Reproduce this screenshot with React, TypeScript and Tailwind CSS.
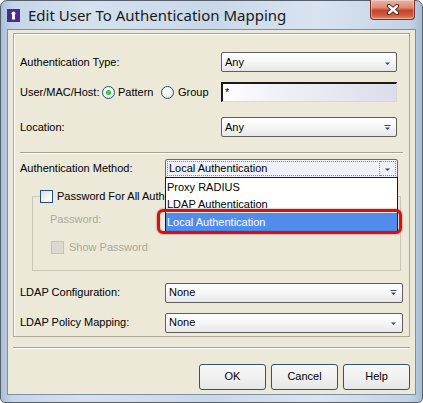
import React from 'react';

function Arrow({ bar }: { bar?: boolean }) {
  return (
    <svg width="7" height="7" viewBox="0 0 7 7" className="shrink-0">
      {bar && <rect x="0.5" y="1" width="6" height="1" fill="#2e4b73" />}
      <path d="M1 3.5h5L3.5 6z" fill="#2e4b73" />
    </svg>
  );
}

function Combo({ value, w, bar }: { value: string; w: string; bar?: boolean }) {
  return (
    <div
      className={`${w} flex h-[20px] shrink-0 items-center justify-between rounded-[2px] border border-[#5f5f5f] bg-[linear-gradient(180deg,#ffffff_0%,#f7f7f7_45%,#e7e7e7_100%)] pl-[3px] pr-[5px]`}
    >
      <span>{value}</span>
      <Arrow bar={bar} />
    </div>
  );
}

function Radio({ checked }: { checked?: boolean }) {
  return (
    <span className="flex h-[13px] w-[13px] shrink-0 items-center justify-center rounded-full border border-[#1d5281] bg-[radial-gradient(circle_at_40%_35%,#ffffff_0%,#f1f1ec_55%,#d4d4cc_100%)]">
      {checked && <span className="h-[5px] w-[5px] rounded-full bg-[radial-gradient(circle,#5fd35f_0%,#21a121_100%)]" />}
    </span>
  );
}

function Button({ label }: { label: string }) {
  return (
    <div className="flex h-[26px] w-[67px] items-center justify-center rounded-[3px] border border-[#335170] bg-[linear-gradient(180deg,#f8f8f8_0%,#efefef_60%,#e6e6e6_100%)]">
      {label}
    </div>
  );
}

export default function App() {
  return (
    <div className="h-[403px] w-[423px] bg-white font-['Liberation_Sans',Arial,sans-serif] text-[11px] text-black">
      <div className="relative flex h-[403px] flex-col rounded-t-[7px] rounded-b-[5px] border border-[#56606c] bg-[linear-gradient(90deg,#a9c0da_0%,#c6d6e8_3%,#d5e1ee_20%,#c9d8e9_50%,#d9e4f0_75%,#c2d3e6_97%,#a6bdd7_100%)] px-[6px] pb-[7px]">
        {/* title bar */}
        <div className="flex h-[28px] shrink-0 items-center">
          <svg width="13" height="13" viewBox="0 0 13 13" className="shrink-0">
            <rect width="13" height="13" fill="#4a2b8e" />
            <circle cx="6.5" cy="4.5" r="2" fill="#fff" />
            <path d="M5.3 5.5h2.4l0.5 5h-3.4z" fill="#fff" />
          </svg>
          <span className="ml-[8px] font-['Noto_Sans',sans-serif] text-[15px] leading-none text-[#1a1a1a]">
            Edit User To Authentication Mapping
          </span>
        </div>

        {/* close button */}
        <div className="absolute right-[7px] top-[-1px] flex h-[20px] w-[45px] items-center justify-center rounded-b-[4px] border border-t-0 border-[#7a3024] bg-[linear-gradient(180deg,#eab3a6_0%,#dc8a76_40%,#c7442b_55%,#cf5a3e_80%,#e08a6c_100%)] shadow-[inset_0_0_0_1px_rgba(255,255,255,0.35)]">
          <svg width="14" height="11" viewBox="0 0 14 11">
            <path d="M3 2l8 7M11 2l-8 7" stroke="#4a1a12" strokeWidth="4.2" strokeLinecap="round" />
            <path d="M3 2l8 7M11 2l-8 7" stroke="#ffffff" strokeWidth="2.4" strokeLinecap="round" />
          </svg>
        </div>

        {/* client area */}
        <div className="flex flex-1 flex-col border border-[#7d8ea6] bg-[#ece9d8]">
          <div className="mx-[5px] mt-[3px] flex flex-col border border-[#aca899] pb-[3px] pl-[6px] pt-[18px] shadow-[inset_1px_1px_0_#ffffff]">
            <div className="flex h-[20px] items-center">
              <span className="w-[201px] shrink-0">Authentication Type:</span>
              <Combo value="Any" w="w-[176px]" />
            </div>

            <div className="mt-[10px] flex h-[20px] items-center">
              <div className="flex w-[201px] shrink-0 items-center">
                <span className="w-[82px] shrink-0">User/MAC/Host:</span>
                <Radio checked />
                <span className="ml-[3px] w-[43px] shrink-0">Pattern</span>
                <Radio />
                <span className="ml-[4px]">Group</span>
              </div>
              <div className="flex h-[20px] w-[176px] items-center border-l-2 border-t-2 border-b border-r border-l-[#1a1a1a] border-t-[#1a1a1a] border-b-[#d6d6e0] border-r-[#d6d6e0] bg-[linear-gradient(90deg,#ffffff_0%,#f1f1f8_30%,#e6e6f1_70%,#dcdcec_100%)] pl-[2px]">
                *
              </div>
            </div>

            <div className="mt-[15px] flex h-[20px] items-center">
              <span className="w-[201px] shrink-0">Location:</span>
              <Combo value="Any" w="w-[176px]" bar />
            </div>

            <div className="mr-[6px] mt-[15px] border-b border-t border-b-white border-t-[#a4a290]" />

            <div className="mt-[5px] flex h-[19px] items-center">
              <span className="w-[145px] shrink-0">Authentication Method:</span>
              <div className="relative h-[19px] w-[233px] shrink-0">
                <div className="flex h-[19px] items-stretch rounded-[2px] border border-[#5b6a9a] bg-[#f0f0f8] p-[1px]">
                  <div className="flex flex-1 items-center border border-dotted border-[#7b86a8] pl-[1px]">
                    Local Authentication
                  </div>
                  <div className="flex w-[16px] items-center justify-center border border-l-0 border-dotted border-[#7b86a8]">
                    <Arrow />
                  </div>
                </div>
                {/* open list */}
                <div className="absolute left-0 top-[18px] z-10 w-[233px] border border-[#1a1a1a] bg-white">
                  <div className="flex h-[18px] items-center pl-[1px]">Proxy RADIUS</div>
                  <div className="flex h-[17px] items-center pl-[1px]">LDAP Authentication</div>
                  <div className="flex h-[18px] items-center bg-[#4f8ceb] pl-[1px] text-white">Local Authentication</div>
                </div>
                <div className="absolute left-[-8px] top-[50px] z-20 h-[25px] w-[245px] rounded-[6px] border-[3px] border-[#e20a0a] shadow-[0_0_2px_rgba(60,0,0,0.6),inset_0_0_1px_rgba(60,0,0,0.6)]" />
              </div>
            </div>

            <fieldset className="ml-[12px] mt-[11px] w-[369px] border border-[#c9c7b8] pb-[16px] pl-[7px]">
              <legend className="flex h-[14px] items-center pr-[2px]">
                <span className="h-[13px] w-[13px] border border-[#1d5281] bg-[linear-gradient(135deg,#dcdcd4_0%,#f6f6f2_60%,#ffffff_100%)]" />
                <span className="ml-[4px]">Password For All Authentication Methods</span>
              </legend>
              <div className="ml-[10px] mt-[8px] text-[#aca899]">Password:</div>
              <div className="ml-[11px] mt-[13px] flex h-[13px] items-center">
                <span className="h-[13px] w-[13px] border border-[#c4c2b6] bg-[#dcdad0]" />
                <span className="ml-[5px] text-[#aca899]">Show Password</span>
              </div>
            </fieldset>

            <div className="mt-[12px] flex h-[20px] items-center">
              <span className="w-[145px] shrink-0">LDAP Configuration:</span>
              <Combo value="None" w="w-[238px]" bar />
            </div>

            <div className="mt-[10px] flex h-[20px] items-center">
              <span className="w-[145px] shrink-0">LDAP Policy Mapping:</span>
              <Combo value="None" w="w-[238px]" />
            </div>
          </div>

          <div className="mx-[5px] mt-[10px] border-b border-t border-b-white border-t-[#a4a290]" />

          <div className="mt-[15px] flex justify-end gap-[5px] pr-[5px]">
            <Button label="OK" />
            <Button label="Cancel" />
            <Button label="Help" />
          </div>
        </div>
      </div>
    </div>
  );
}
